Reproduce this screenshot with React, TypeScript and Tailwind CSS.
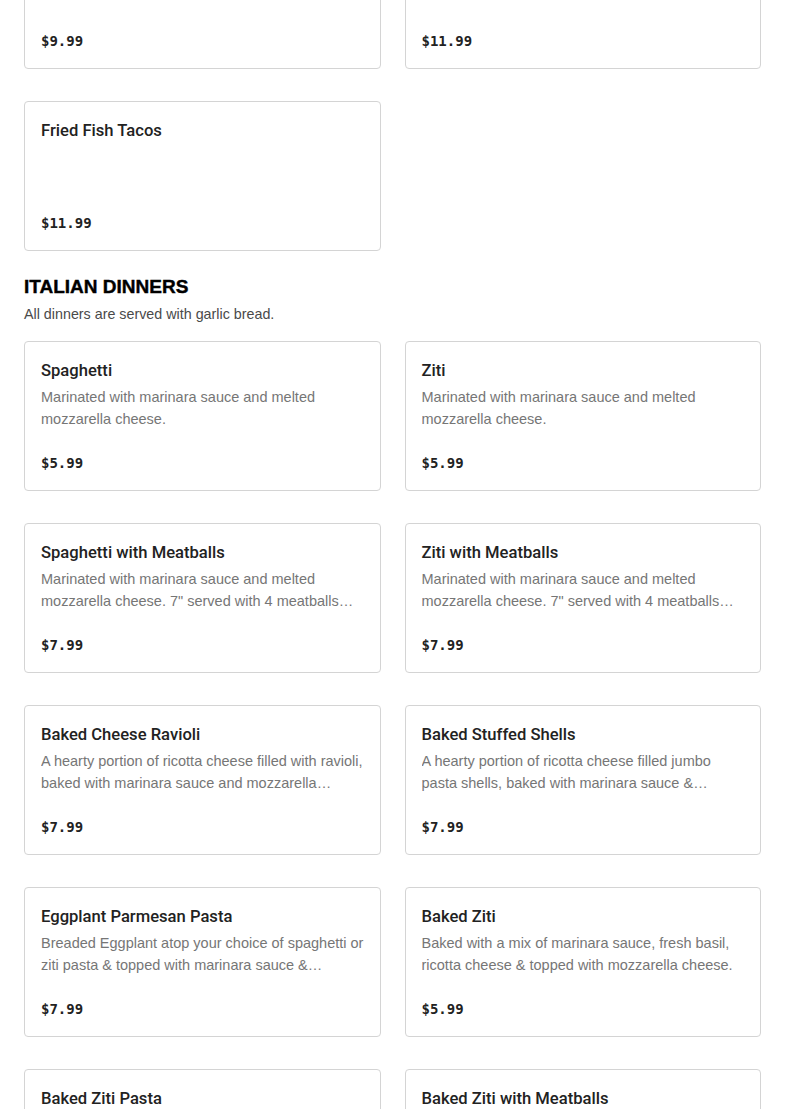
type Item = { name: string; desc?: string; price: string };

const topRow: Item[] = [
  { name: "Fish & Chips", price: "$9.99" },
  { name: "Fried Shrimp Basket", price: "$11.99" },
  { name: "Fried Fish Tacos", price: "$11.99" },
];

const dinners: Item[] = [
  { name: "Spaghetti", desc: "Marinated with marinara sauce and melted mozzarella cheese.", price: "$5.99" },
  { name: "Ziti", desc: "Marinated with marinara sauce and melted mozzarella cheese.", price: "$5.99" },
  {
    name: "Spaghetti with Meatballs",
    desc: "Marinated with marinara sauce and melted mozzarella cheese. 7\" served with 4 meatballs and garlic bread.",
    price: "$7.99",
  },
  {
    name: "Ziti with Meatballs",
    desc: "Marinated with marinara sauce and melted mozzarella cheese. 7\" served with 4 meatballs and garlic bread.",
    price: "$7.99",
  },
  {
    name: "Baked Cheese Ravioli",
    desc: "A hearty portion of ricotta cheese filled with ravioli, baked with marinara sauce and mozzarella cheese.",
    price: "$7.99",
  },
  {
    name: "Baked Stuffed Shells",
    desc: "A hearty portion of ricotta cheese filled jumbo pasta shells, baked with marinara sauce & mozzarella cheese.",
    price: "$7.99",
  },
  {
    name: "Eggplant Parmesan Pasta",
    desc: "Breaded Eggplant atop your choice of spaghetti or ziti pasta & topped with marinara sauce & mozzarella cheese.",
    price: "$7.99",
  },
  {
    name: "Baked Ziti",
    desc: "Baked with a mix of marinara sauce, fresh basil, ricotta cheese & topped with mozzarella cheese.",
    price: "$5.99",
  },
  { name: "Baked Ziti Pasta", desc: "Baked ziti pasta with marinara sauce and melted mozzarella cheese.", price: "$6.99" },
  { name: "Baked Ziti with Meatballs", desc: "Baked ziti pasta with meatballs, marinara sauce and mozzarella.", price: "$8.99" },
];

function Card({ item }: { item: Item }) {
  return (
    <div className="flex h-[150px] flex-col rounded-[4px] border border-[#d4d4d4] bg-white px-4 pt-[17px] pb-4">
      <div className="font-['Roboto',sans-serif] text-[16.6px] leading-6 font-medium text-[#222]">{item.name}</div>
      {item.desc && (
        <p className="mt-[3px] line-clamp-2 text-[14.5px] leading-[22px] text-[#767676]">{item.desc}</p>
      )}
      <div className="mt-auto font-['DejaVu_Sans_Mono',monospace] text-[14px] leading-[22px] font-bold text-[#222]">
        {item.price}
      </div>
    </div>
  );
}

export default function App() {
  return (
    <main className="min-h-screen overflow-hidden bg-white px-6 font-['Liberation_Sans',Arial,sans-serif]">
      <div className="-mt-[81px] grid grid-cols-2 gap-x-6 gap-y-8">
        {topRow.map((it) => (
          <Card key={it.name} item={it} />
        ))}
      </div>

      <h2 className="mt-[24px] text-[19px] leading-6 font-black text-black uppercase [-webkit-text-stroke:0.4px_black]">
        Italian Dinners
      </h2>
      <p className="mt-[5px] text-[14.3px] leading-5 text-[#4a4a4a]">All dinners are served with garlic bread.</p>

      <div className="mt-[17px] grid grid-cols-2 gap-x-6 gap-y-8">
        {dinners.map((it) => (
          <Card key={it.name} item={it} />
        ))}
      </div>
    </main>
  );
}
